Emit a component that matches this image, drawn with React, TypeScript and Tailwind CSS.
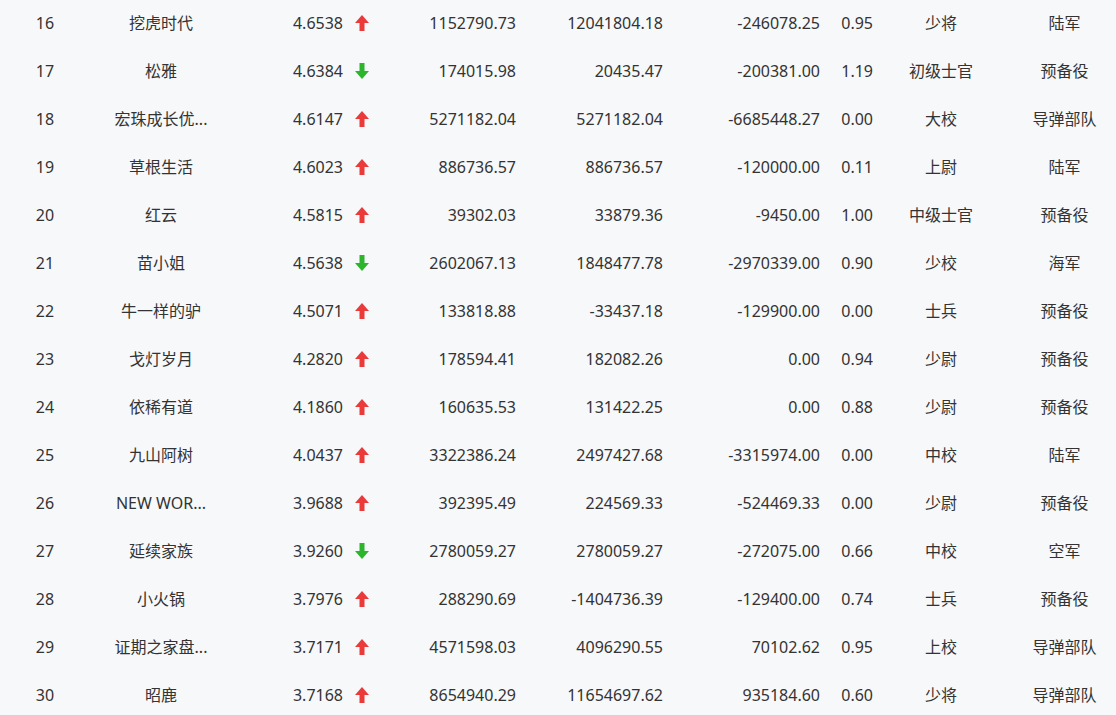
const rows = [
  ["16", "挖虎时代", "4.6538", "up", "1152790.73", "12041804.18", "-246078.25", "0.95", "少将", "陆军"],
  ["17", "松雅", "4.6384", "down", "174015.98", "20435.47", "-200381.00", "1.19", "初级士官", "预备役"],
  ["18", "宏珠成长优...", "4.6147", "up", "5271182.04", "5271182.04", "-6685448.27", "0.00", "大校", "导弹部队"],
  ["19", "草根生活", "4.6023", "up", "886736.57", "886736.57", "-120000.00", "0.11", "上尉", "陆军"],
  ["20", "红云", "4.5815", "up", "39302.03", "33879.36", "-9450.00", "1.00", "中级士官", "预备役"],
  ["21", "苗小姐", "4.5638", "down", "2602067.13", "1848477.78", "-2970339.00", "0.90", "少校", "海军"],
  ["22", "牛一样的驴", "4.5071", "up", "133818.88", "-33437.18", "-129900.00", "0.00", "士兵", "预备役"],
  ["23", "戈灯岁月", "4.2820", "up", "178594.41", "182082.26", "0.00", "0.94", "少尉", "预备役"],
  ["24", "依稀有道", "4.1860", "up", "160635.53", "131422.25", "0.00", "0.88", "少尉", "预备役"],
  ["25", "九山阿树", "4.0437", "up", "3322386.24", "2497427.68", "-3315974.00", "0.00", "中校", "陆军"],
  ["26", "NEW WOR...", "3.9688", "up", "392395.49", "224569.33", "-524469.33", "0.00", "少尉", "预备役"],
  ["27", "延续家族", "3.9260", "down", "2780059.27", "2780059.27", "-272075.00", "0.66", "中校", "空军"],
  ["28", "小火锅", "3.7976", "up", "288290.69", "-1404736.39", "-129400.00", "0.74", "士兵", "预备役"],
  ["29", "证期之家盘...", "3.7171", "up", "4571598.03", "4096290.55", "70102.62", "0.95", "上校", "导弹部队"],
  ["30", "昭鹿", "3.7168", "up", "8654940.29", "11654697.62", "935184.60", "0.60", "少将", "导弹部队"],
];

// block arrow used for rank change
function Arrow({ dir }: { dir: string }) {
  const up = dir === "up";
  return (
    <svg width="14" height="16" viewBox="0 0 14 16" className="shrink-0">
      {up ? (
        <polygon points="7,0 14,8 9.5,8 9.5,16 4.5,16 4.5,8 0,8" fill="#ea3a3a" />
      ) : (
        <polygon points="7,16 14,8 9.5,8 9.5,0 4.5,0 4.5,8 0,8" fill="#2cb52c" />
      )}
    </svg>
  );
}

export default function App() {
  return (
    <div
      className="w-[1116px] h-[715px] overflow-hidden bg-[#f7f8fa] text-[#333] text-[16px]"
      style={{ fontFamily: '"Noto Sans", "Noto Sans CJK SC", sans-serif' }}
    >
      <div className="-mt-px">
        {rows.map((r) => (
          <div
            key={r[0]}
            className="grid grid-cols-[90px_142px_146px_148px_147px_157px_53px_116px_1fr] h-12 items-center whitespace-nowrap"
          >
            <div className="text-center">{r[0]}</div>
            <div className="flex justify-center">
              <div className="w-[100px] truncate text-center">{r[1]}</div>
            </div>
            <div className="flex justify-end items-center gap-3 pr-[9px]">
              <span>{r[2]}</span>
              <Arrow dir={r[3]} />
            </div>
            <div className="text-right pr-[10px]">{r[4]}</div>
            <div className="text-right pr-[10px]">{r[5]}</div>
            <div className="text-right pr-[10px]">{r[6]}</div>
            <div className="text-right pr-[10px]">{r[7]}</div>
            <div className="text-center">{r[8]}</div>
            <div className="text-center pl-[14px]">{r[9]}</div>
          </div>
        ))}
      </div>
    </div>
  );
}
